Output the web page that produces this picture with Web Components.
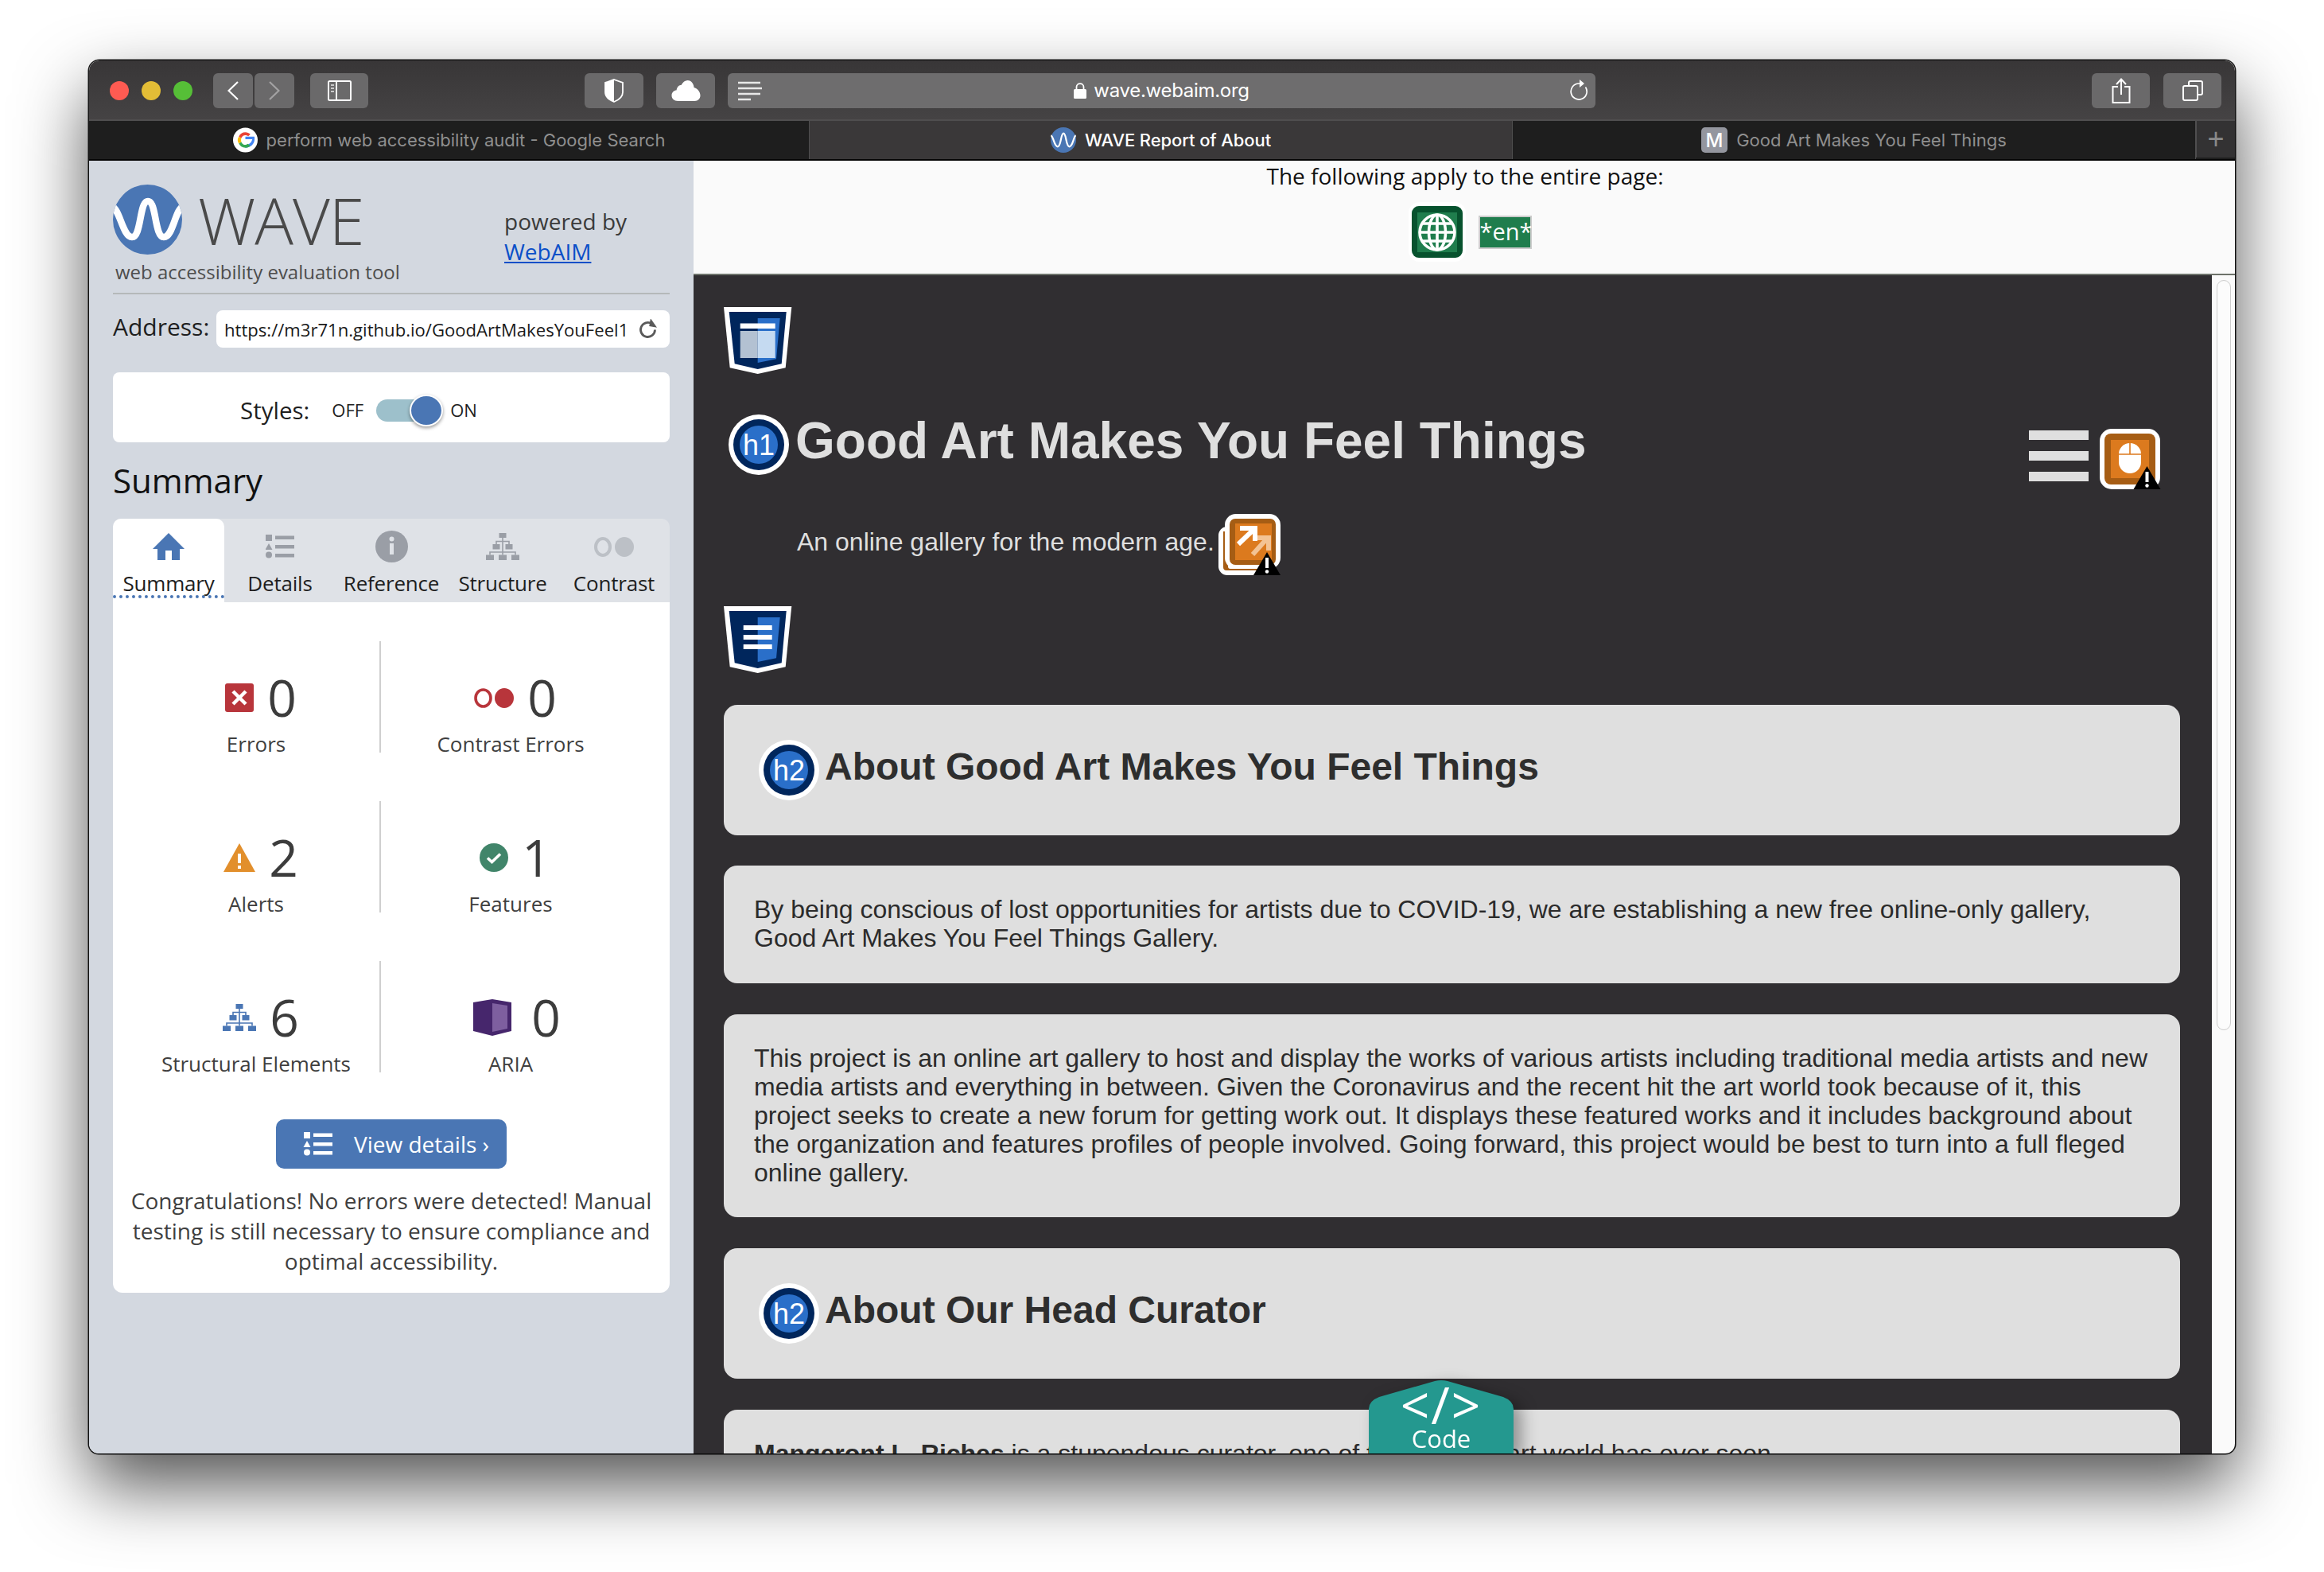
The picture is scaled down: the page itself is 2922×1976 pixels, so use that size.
<!DOCTYPE html>
<html lang="en">
<head>
<meta charset="utf-8">
<title>WAVE Report of About</title>
<style>
  html, body { margin: 0; background: #fff; }
  body { width: 2922px; height: 1976px; overflow: hidden; }
</style>
</head>
<body>
<browser-window>
  <browser-toolbar slot="chrome"></browser-toolbar>
  <tab-strip slot="chrome">
    <tab-item icon="google">perform web accessibility audit - Google Search</tab-item>
    <tab-item icon="wavefav" active>WAVE Report of About</tab-item>
    <tab-item icon="mfav">Good Art Makes You Feel Things</tab-item>
  </tab-strip>
  <wave-sidebar></wave-sidebar>
  <report-view>
    <content-panel heading="h2">About Good Art Makes You Feel Things</content-panel>
    <content-panel style="margin-top:-1px;padding-bottom:39px">By being conscious of lost opportunities for artists due to COVID-19, we are establishing a new free online-only gallery, Good Art Makes You Feel Things Gallery.</content-panel>
    <content-panel>This project is an online art gallery to host and display the works of various artists including traditional media artists and new media artists and everything in between. Given the Coronavirus and the recent hit the art world took because of it, this project seeks to create a new forum for getting work out. It displays these featured works and it includes background about the organization and features profiles of people involved. Going forward, this project would be best to turn into a full fleged online gallery.</content-panel>
    <content-panel heading="h2">About Our Head Curator</content-panel>
    <content-panel>
      <b>Mangeront L. Riches</b> is a stupendous curator, one of the best the art world has ever seen.</content-panel>
  </report-view>
</browser-window>

<script>
// every svg used on the page, looked up by <ui-icon name="...">
const shieldBase = `<path d="M0 0H85.3L77.7 76.3 42.7 84 7.7 76.3Z" fill="#fff"/><path d="M6.7 6H78.7L72.7 71.3 42.7 78 13.7 71.3Z" fill="#00265c"/><path d="M42.7 14H70.7L66 65.3 42.7 70Z" fill="#2a6fc9"/>`;
const warnTri = (x, y) => `<g transform="translate(${x} ${y})"><path d="M0 29 17 0 34 29Z" fill="#000"/><path d="M17 7V20" stroke="#fff" stroke-width="4"/><circle cx="17" cy="24.5" r="2.2" fill="#fff"/></g>`;
const treeIcon = (fill, w, h) => `<svg width="${w}" height="${h}" viewBox="0 0 42 34"><g fill="${fill}"><rect x="16.500" y="0" width="9" height="6"/><rect x="8.500" y="14" width="9" height="6.500"/><rect x="24.500" y="14" width="9" height="6.500"/><rect x="0" y="27.500" width="10" height="6.500"/><rect x="16" y="27.500" width="10" height="6.500"/><rect x="32" y="27.500" width="10" height="6.500"/></g><g fill="none" stroke="${fill}" stroke-width="1.600"><path d="M21 6V27.500M13 14V10.500H29V14M5 27.500V24H37V27.500"/></g></svg>`;
const listIcon = (fill, w, h) => `<svg width="${w}" height="${h}" viewBox="0 0 36 30"><g fill="${fill}"><rect x="0" y="0" width="8" height="8"/><path d="M4 11 8.500 19H-.5Z"/><circle cx="4" cy="25.500" r="4"/><rect x="12" y="1.500" width="24" height="4.500"/><rect x="12" y="13" width="24" height="4.500"/><rect x="12" y="24" width="24" height="4.500"/></g></svg>`;
const headingIcon = (t) => `<svg width="76" height="76" viewBox="0 0 76 76"><circle cx="38" cy="38" r="38" fill="#fff"/><circle cx="38" cy="38" r="32" fill="#00265c"/><circle cx="38" cy="38" r="24" fill="#2a6fc9"/><text x="38" y="51" font-family="'Liberation Sans',sans-serif" font-size="36" font-weight="400" text-anchor="middle" fill="#fff">${t}</text></svg>`;
const ICONS = {
  back: `<svg width="14" height="24" viewBox="0 0 14 24"><path d="M13 1 1.500 12 13 23" fill="none" stroke="#fff" stroke-width="2.200"/></svg>`,
  forward: `<svg width="14" height="24" viewBox="0 0 14 24"><path d="M1 1 12.500 12 1 23" fill="none" stroke="#a3a2a3" stroke-width="2.200"/></svg>`,
  sidebar: `<svg width="30" height="26" viewBox="0 0 30 26"><rect x="1" y="1" width="28" height="24" rx="1.500" fill="none" stroke="#fff" stroke-width="2"/><path d="M11 1V25" stroke="#fff" stroke-width="2"/><path d="M4 6H8M4 10H8M4 14H8" stroke="#c9c9c9" stroke-width="2"/></svg>`,
  shieldBtn: `<svg width="24" height="30" viewBox="0 0 24 30"><path d="M12 1 23 5V17C23 23 17 27 12 29 7 27 1 23 1 17V5Z" fill="none" stroke="#fff" stroke-width="1.800"/><path d="M12 1 1 5V17C1 23 7 27 12 29Z" fill="#fff"/></svg>`,
  cloud: `<svg width="37" height="26" viewBox="0 0 36 26"><path d="M8 26C3 26 0 23 0 19 0 15 3 12.500 6 12.500 7 7 10 6 12 6 14 2 17 0 20 0 25 0 28 5 28 9 32 10 36 14 36 19 36 23 33 26 29 26Z" fill="#fff"/></svg>`,
  reader: `<svg width="30" height="26" viewBox="0 0 30 26"><path d="M0 2H28M0 9H30M0 16H28M0 23H16" stroke="#e8e8e8" stroke-width="2.400"/></svg>`,
  lock: `<svg width="16" height="20" viewBox="0 0 16 20"><rect x="0" y="8" width="16" height="12" rx="1.500" fill="#fff"/><path d="M3.500 9V5.500C3.500 3 5.500 1.200 8 1.200S12.500 3 12.500 5.500V9" fill="none" stroke="#fff" stroke-width="1.800"/></svg>`,
  reload: `<svg width="24" height="26" viewBox="0 0 24 26"><path d="M20.500 9.500A10 10 0 1 1 12 5H15" fill="none" stroke="#fff" stroke-width="1.700"/><path d="M13 0 19 5 13 10Z" fill="#fff"/></svg>`,
  share: `<svg width="24" height="32" viewBox="0 0 24 32"><path d="M8 11H1.500V31H22.500V11H16" fill="none" stroke="#fff" stroke-width="2"/><path d="M12 21V2M6 8 12 1.500 18 8" fill="none" stroke="#fff" stroke-width="2"/></svg>`,
  tabs: `<svg width="26" height="26" viewBox="0 0 26 26"><rect x="1" y="7" width="18" height="18" rx="2" fill="none" stroke="#fff" stroke-width="2"/><path d="M8 6V3C8 2 9 1 10 1H23C24 1 25 2 25 3V16C25 17 24 18 23 18H20" fill="none" stroke="#fff" stroke-width="2"/></svg>`,
  google: `<svg width="31" height="32" viewBox="0 0 32 32"><circle cx="16" cy="16" r="16" fill="#fff"/><path d="M16 11.500V17H25C24 21.500 20.500 24.500 16 24.500V28C23 28 28 23 28 16.500 28 15.500 28 14.500 27.800 13.500H16Z" fill="#4285f4" transform="translate(0 -2)"/><path d="M7.500 20.500C9 24 12 26 16 26 19 26 21 25 22.500 23.500L19 21C18 21.800 17 22.300 16 22.300 13.500 22.300 11.500 20.500 10.800 18.500Z" fill="#34a853"/><path d="M6 16C6 17.500 6.500 19 7.500 20.500L10.800 18.500C10.300 17 10.300 15 10.800 13.500L7.500 11.500C6.500 13 6 14.500 6 16Z" fill="#fbbc05"/><path d="M7.500 11.500C9 8 12 6 16 6 18.500 6 20.800 7 22.500 8.500L19.800 11.200C18.800 10.300 17.500 9.700 16 9.700 13.500 9.700 11.500 11.300 10.800 13.500Z" fill="#ea4335"/></svg>`,
  wavefav: `<svg width="32" height="32" viewBox="0 0 87 87"><circle cx="43.500" cy="43.500" r="43.500" fill="#4a76b4"/><path d="M1 28C10 32 12 66 24 66 36 66 34 21 44 21 54 21 52 66 64 66 76 66 78 32 86 28" fill="none" stroke="#fff" stroke-width="6"/></svg>`,
  mfav: `<svg width="33" height="32" viewBox="0 0 33 32"><rect width="33" height="32" rx="5" fill="#94969f"/><text x="16.500" y="25" font-family="Inter,'Liberation Sans',sans-serif" font-size="24" font-weight="500" text-anchor="middle" fill="#fff">M</text></svg>`,
  logo: `<svg width="87" height="88" viewBox="0 0 87 88"><defs><clipPath id="c"><ellipse cx="43.500" cy="44" rx="43.500" ry="44"/></clipPath></defs><ellipse cx="43.500" cy="44" rx="43.500" ry="44" fill="#4a76b4"/><path clip-path="url(#c)" d="M-2 27C9 30 12 66 24 66 36 66 33 21 44 21 55 21 52 66 64 66 76 66 78 30 89 27" fill="none" stroke="#fff" stroke-width="8.500"/></svg>`,
  refresh: `<svg width="26" height="26" viewBox="0 0 26 26"><path d="M21.500 13.500A9 9 0 1 1 17.500 6" fill="none" stroke="#5a5a5a" stroke-width="2.800"/><path d="M15 0V10H25Z" fill="#5a5a5a" transform="rotate(10 20 5)"/></svg>`,
  home: `<svg width="40" height="34" viewBox="0 0 40 34"><path d="M20 0 40 20H34V34H24V22H16V34H6V20H0Z" fill="#4a76b4"/></svg>`,
  list: listIcon("#9a9ea6", 36, 30),
  info: `<svg width="41" height="40" viewBox="0 0 41 40"><ellipse cx="20.500" cy="20" rx="20.500" ry="20" fill="#9a9ea6"/><circle cx="20.500" cy="10.500" r="3" fill="#dfe2e7"/><rect x="18" y="16" width="5" height="14" fill="#dfe2e7"/></svg>`,
  treeGray: treeIcon("#9a9ea6", 42, 38),
  contrastGray: `<svg width="50" height="25" viewBox="0 0 50 25"><ellipse cx="11" cy="12.500" rx="9" ry="10.500" fill="none" stroke="#bcc0c6" stroke-width="4"/><ellipse cx="38" cy="12.500" rx="12" ry="12.500" fill="#bcc0c6"/></svg>`,
  error: `<svg width="36" height="36" viewBox="0 0 36 36"><rect width="36" height="36" rx="3" fill="#b8353b"/><path d="M10 10 26 26M26 10 10 26" stroke="#fff" stroke-width="4.500"/></svg>`,
  contrast: `<svg width="50" height="25" viewBox="0 0 50 25"><ellipse cx="11.500" cy="12.500" rx="9.500" ry="10.500" fill="none" stroke="#b8353b" stroke-width="3.600"/><ellipse cx="38" cy="12.500" rx="12" ry="12.500" fill="#b8353b"/></svg>`,
  alert: `<svg width="40" height="36" viewBox="0 0 40 36"><path d="M20 0 40 36H0Z" fill="#e28f2c"/><rect x="18" y="13" width="4" height="12" fill="#fff"/><rect x="18" y="28" width="4" height="4" fill="#fff"/></svg>`,
  feature: `<svg width="36" height="36" viewBox="0 0 36 36"><circle cx="18" cy="18" r="18" fill="#41856a"/><path d="M10 18.500 15.500 23.500 26 13.500" fill="none" stroke="#fff" stroke-width="3.600"/></svg>`,
  tree: treeIcon("#4a76b4", 42, 38),
  aria: `<svg width="48" height="46" viewBox="0 0 48 46"><path d="M0 4 24 0 48 4V40L24 46 0 40Z" fill="#46266c"/><path d="M24 5 43 8V37L24 41Z" fill="#7e5f9f"/></svg>`,
  listWhite: listIcon("#fff", 38, 30),
  globe: `<svg width="72" height="75" viewBox="0 0 72 75"><rect width="72" height="75" rx="14" fill="#fff"/><rect x="4" y="5" width="64" height="65" rx="9" fill="#07522e"/><rect x="11" y="13" width="50" height="50" fill="#1f7d4d"/><g fill="none" stroke="#fff" stroke-width="3.600"><circle cx="36" cy="38" r="22"/><ellipse cx="36" cy="38" rx="10.500" ry="22"/><path d="M36 16V60M14 38H58M17 27H55M17 49H55"/></g></svg>`,
  shieldHeader: `<svg width="86" height="84" viewBox="0 0 86 84">${shieldBase}<rect x="20.700" y="20.500" width="44" height="6.500" fill="#fff"/><rect x="20.700" y="30" width="22" height="34" fill="#b3c1d2"/><rect x="42.700" y="30" width="22" height="34" fill="#c5daf1"/></svg>`,
  shieldMain: `<svg width="86" height="84" viewBox="0 0 86 84">${shieldBase}<path d="M24.700 27H60.700M24.700 39H60.700M24.700 51H60.700" stroke="#fff" stroke-width="6"/></svg>`,
  h1: headingIcon("h1"),
  h2: headingIcon("h2"),
  mouse: `<svg width="77" height="76" viewBox="0 0 77 76"><rect width="76" height="76" rx="15" fill="#fff"/><rect x="6" y="6" width="64" height="64" rx="8" fill="#a65d14"/><rect x="14" y="14" width="48" height="48" fill="#dc7a1e"/><rect x="24" y="18" width="28" height="38" rx="14" fill="#fff"/><path d="M24 32H52M38 18V32" stroke="#dc7a1e" stroke-width="1.600"/>${warnTri(42.500, 47)}</svg>`,
  newWindow: `<svg width="80" height="77" viewBox="0 0 80 77"><rect x="0" y="16" width="62" height="61" rx="11" fill="#fff"/><path d="M6 22H12V66C12 68 13 69 15 69H50V71H10C7.500 71 6 69.500 6 67Z" fill="#a65d14"/><rect x="8" y="0" width="70" height="69" rx="14" fill="#fff"/><rect x="14" y="6" width="58" height="58" rx="7" fill="#a65d14"/><rect x="21" y="12" width="46" height="46" fill="#dc7a1e"/><path d="M43 51 61 31M47 30H63V46" fill="none" stroke="#f3c394" stroke-width="6"/><path d="M25 38 45 19M27 18H46V34" fill="none" stroke="#fff" stroke-width="6"/>${warnTri(44, 48)}</svg>`,
};

class UiIcon extends HTMLElement {
  constructor() {
    super();
    this.attachShadow({ mode: "open" });
  }
  connectedCallback() {
    this.shadowRoot.innerHTML = `<style>:host{display:inline-flex;flex:none;line-height:0}</style>` + (ICONS[this.getAttribute("name")] || "");
  }
}
customElements.define("ui-icon", UiIcon);

// base class: markup + styles handed over by each component
class ShadowBox extends HTMLElement {
  constructor() {
    super();
    this.attachShadow({ mode: "open" });
  }
  connectedCallback() {
    this.shadowRoot.innerHTML = `<style>${this.css()}</style>${this.html()}`;
  }
}

class BrowserWindow extends ShadowBox {
  css() { return `
    :host { display: block; box-sizing: border-box; width: 2698px; height: 1751px; margin: 76px 0 0 112px;
      border-radius: 13px 13px 12px 12px; box-shadow: 0 40px 88px rgba(0,0,0,.68), 0 0 0 1.500px #1a1a1a; overflow: hidden; }
    .frame { display: flex; flex-direction: column; height: 100%; overflow: hidden; border-radius: inherit; }
    .body { flex: 1; min-height: 0; display: flex; }
  `; }
  html() { return `<div class="frame"><slot name="chrome"></slot><div class="body"><slot></slot></div></div>`; }
}
customElements.define("browser-window", BrowserWindow);

class BrowserToolbar extends ShadowBox {
  css() { return `
    :host { display: flex; align-items: center; box-sizing: border-box; height: 76px; padding: 1px 17px 0 26px;
      background: linear-gradient(#383637, #454344); border-bottom: 2px solid #4f4e4f; }
    .lights { display: flex; gap: 16px; margin-right: 26px; }
    .lights i { width: 24px; height: 24px; border-radius: 50%; }
    .btn { display: flex; align-items: center; justify-content: center; height: 44px; background: #6a696a; border-radius: 6px; box-sizing: border-box; }
    .addr { width: 1091px; margin-left: 16px; position: relative; justify-content: center; gap: 9px;
      font: 24px Inter, "Liberation Sans", sans-serif; color: #fff; letter-spacing: -.3px; background: #6e6d6e; }
    .addr .l { position: absolute; left: 13px; top: 10px; }
    .addr .r { position: absolute; right: 9px; top: 8px; }
    .spacer { flex: 1; }
  `; }
  html() { return `
    <div class="lights"><i style="background:#fe5b52"></i><i style="background:#e3bd36"></i><i style="background:#56bf37"></i></div>
    <div class="btn" style="width:50px"><ui-icon name="back"></ui-icon></div>
    <div class="btn" style="width:50px;margin-left:2px"><ui-icon name="forward"></ui-icon></div>
    <div class="btn" style="width:73px;margin-left:20px"><ui-icon name="sidebar"></ui-icon></div>
    <div class="btn" style="width:74px;margin-left:272px"><ui-icon name="shieldBtn"></ui-icon></div>
    <div class="btn" style="width:74px;margin-left:16px"><ui-icon name="cloud"></ui-icon></div>
    <div class="btn addr"><ui-icon class="l" name="reader"></ui-icon><ui-icon name="lock"></ui-icon><span>wave.webaim.org</span><ui-icon class="r" name="reload"></ui-icon></div>
    <div class="spacer"></div>
    <div class="btn" style="width:73px"><ui-icon name="share"></ui-icon></div>
    <div class="btn" style="width:73px;margin-left:17px"><ui-icon name="tabs"></ui-icon></div>
  `; }
}
customElements.define("browser-toolbar", BrowserToolbar);

class TabStrip extends ShadowBox {
  css() { return `
    :host { display: flex; box-sizing: border-box; height: 50px; padding-bottom: 2px; background: #1e1e1e; border-bottom: 2px solid #050505; }
    .plus { flex: 1; display: flex; align-items: center; justify-content: center; background: #333233; color: #8a8a8a;
      border-left: 1px solid #4f4e4f; font: 300 36px "Liberation Sans", sans-serif; }
    ::slotted(:nth-child(1)) { width: 906px; }
    ::slotted(:nth-child(2)) { width: 884px; }
    ::slotted(:nth-child(3)) { width: 859px; }
  `; }
  html() { return `<slot></slot><div class="plus">+</div>`; }
}
customElements.define("tab-strip", TabStrip);

class TabItem extends ShadowBox {
  css() { return `
    :host { display: flex; align-items: center; justify-content: center; gap: 11px; box-sizing: border-box; height: 48px;
      font: 22px Inter, "Liberation Sans", sans-serif; color: #8f8f8f; border-right: 1px solid #4f4e4f; }
    :host([active]) { background: #3a3839; color: #fff; font-weight: 500; letter-spacing: -.1px; }
  `; }
  html() { return `<ui-icon name="${this.getAttribute("icon")}"></ui-icon><span><slot></slot></span>`; }
}
customElements.define("tab-item", TabItem);

class WaveSidebar extends ShadowBox {
  css() { return `
    :host { display: block; box-sizing: border-box; width: 760px; flex: none; height: 100%; padding: 0 30px; background: #d3d8e0;
      font-family: "Open Sans", "Liberation Sans", sans-serif; color: #1e1e1e; }
    .head { display: flex; height: 166px; border-bottom: 2px solid #b5b9ba; box-sizing: content-box; }
    .brand { width: 492px; padding-top: 30px; }
    .logo { display: flex; align-items: center; height: 88px; gap: 20px; }
    .wave { font-size: 81px; font-weight: 300; color: #4a4a4a; line-height: 88px; letter-spacing: -1px; padding-top: 2px; }
    .tag { font-size: 24px; line-height: 30px; color: #4d4d4d; margin: 7px 0 0 3px; }
    .pow { padding-top: 57px; font-size: 28px; line-height: 38px; color: #3a3a3a; }
    .pow a { color: #0b4fc8; text-decoration: underline; display: block; }
    .addr { display: flex; align-items: center; height: 47px; margin-top: 20px; }
    .addr label { width: 130px; font-size: 30px; padding-bottom: 7px; }
    .field { flex: 1; height: 47px; display: flex; align-items: center; justify-content: space-between; padding: 0 14px 0 10px;
      box-sizing: border-box; background: #fff; border-radius: 8px; font-size: 22.100px; color: #1a1a1a; }
    .styles { display: flex; align-items: center; height: 88px; margin-top: 31px; padding: 6px 0 0 160px; box-sizing: border-box;
      background: #fff; border-radius: 8px; font-size: 29.500px; }
    .styles small { font-size: 22px; }
    .track { position: relative; width: 57px; height: 28px; margin: 0 36px 0 16px; background: #9dc0cb; border-radius: 14px 0 0 14px; top: 1px; }
    .knob { position: absolute; left: 42px; top: -6px; width: 42px; height: 40px; border-radius: 50%; background: #4a76b4; border: 2px solid #fff; box-sizing: border-box; box-shadow: 0 2px 4px rgba(0,0,0,.4); }
    h2 { margin: 0; height: 96px; padding-top: 21px; box-sizing: border-box; font-size: 42px; line-height: 54px; font-weight: 400; color: #111; }
    .tabs { display: grid; grid-template-columns: repeat(5, 140px); height: 105px; background: #dfe2e7; border-radius: 10px 10px 0 0; }
  `; }
  html() { return `
    <div class="head">
      <div class="brand">
        <div class="logo"><ui-icon name="logo"></ui-icon><span class="wave">WAVE</span></div>
        <div class="tag">web accessibility evaluation tool</div>
      </div>
      <div class="pow">powered by<a>WebAIM</a></div>
    </div>
    <div class="addr"><label>Address:</label><div class="field"><span>https://m3r71n.github.io/GoodArtMakesYouFeel1</span><ui-icon name="refresh"></ui-icon></div></div>
    <div class="styles"><span>Styles:</span><small style="margin-left:28px">OFF</small><div class="track"><div class="knob"></div></div><small>ON</small></div>
    <h2>Summary</h2>
    <div class="tabs">
      <side-tab icon="home" active>Summary</side-tab>
      <side-tab icon="list">Details</side-tab>
      <side-tab icon="info">Reference</side-tab>
      <side-tab icon="treeGray">Structure</side-tab>
      <side-tab icon="contrastGray">Contrast</side-tab>
    </div>
    <summary-card></summary-card>
  `; }
}
customElements.define("wave-sidebar", WaveSidebar);

class SideTab extends ShadowBox {
  css() { return `
    :host { display: flex; flex-direction: column; align-items: center; box-sizing: border-box; height: 105px; font-size: 26px; color: #1e1e1e; }
    :host([active]) { background: #fff; border-radius: 10px 10px 0 0; }
    .ic { height: 70px; display: flex; align-items: center; }
    .lb { line-height: 36px; height: 30px; margin-top: -7px; flex: none; letter-spacing: -.2px; }
    :host([active]) .lb { width: 100%; text-align: center; border-bottom: 4px dotted #4a76b4; height: 33px; }
  `; }
  html() { return `<div class="ic"><ui-icon name="${this.getAttribute("icon")}"></ui-icon></div><div class="lb"><slot></slot></div>`; }
}
customElements.define("side-tab", SideTab);

class SummaryCard extends ShadowBox {
  css() { return `
    :host { display: block; box-sizing: border-box; height: 868px; padding-top: 49px; background: #fff; border-radius: 0 0 12px 12px; }
    .grid { display: grid; grid-template-columns: 312px 326px; row-gap: 61px; margin-left: 25px; }
    .btn { display: flex; align-items: center; width: 290px; height: 62px; margin: 59px auto 0; box-sizing: border-box; padding-left: 34px; gap: 26px;
      background: #4a76b4; border-radius: 10px; color: #fff; font-size: 28px; }
    p { margin: 21px 0 0; text-align: center; font-size: 28px; line-height: 38px; color: #3f3f3f; }
  `; }
  html() { return `
    <div class="grid">
      <stat-box icon="error" count="0" divided>Errors</stat-box>
      <stat-box icon="contrast" count="0">Contrast Errors</stat-box>
      <stat-box icon="alert" count="2" divided>Alerts</stat-box>
      <stat-box icon="feature" count="1">Features</stat-box>
      <stat-box icon="tree" count="6" divided>Structural Elements</stat-box>
      <stat-box icon="aria" count="0" wide>ARIA</stat-box>
    </div>
    <div class="btn"><ui-icon name="listWhite"></ui-icon><span>View details ›</span></div>
    <p>Congratulations! No errors were detected! Manual testing is still necessary to ensure compliance and optimal accessibility.</p>
  `; }
}
customElements.define("summary-card", SummaryCard);

class StatBox extends ShadowBox {
  css() { return `
    :host { display: block; box-sizing: border-box; height: 140px; text-align: center; color: #3f3f3f; }
    :host([divided]) { border-right: 2px solid #cfcfcf; }
    .num { display: flex; align-items: center; justify-content: center; gap: 17px; height: 72px; padding: 35px 0 0 12px; font-size: 64px; line-height: 72px; color: #3c3c3c; }
    :host([wide]) .num { gap: 25px; padding-left: 16px; }
    .lb { font-size: 26px; line-height: 38px; margin-top: 3px; white-space: nowrap; }
  `; }
  html() { return `<div class="num"><ui-icon name="${this.getAttribute("icon")}"></ui-icon><span>${this.getAttribute("count")}</span></div><div class="lb"><slot></slot></div>`; }
}
customElements.define("stat-box", StatBox);

class ReportView extends ShadowBox {
  css() { return `
    :host { display: block; position: relative; flex: 1; min-width: 0; height: 100%; overflow: hidden;
      font-family: "Liberation Sans", Arial, sans-serif; background: #302e31; }
    .top { height: 144px; box-sizing: border-box; background: #fafafa; border-bottom: 2px solid #6d726a; text-align: center; }
    .top p { margin: 0; font: 28px/40px "Open Sans", sans-serif; color: #111; position: relative; left: 1px; top: -1px; }
    .marks { display: flex; justify-content: center; align-items: center; gap: 16px; margin-top: 12px; padding-left: 14px; }
    .en { width: 67px; height: 42px; box-sizing: border-box; border: 2px solid #ccc; background: #1f7d4d; color: #fff;
      font: 29px/36px "Open Sans", sans-serif; text-align: center; white-space: nowrap; }
    .wrap { display: flex; height: calc(100% - 144px); }
    .page { width: 1909px; flex: none; box-sizing: border-box; padding: 40px 40px 0 38px; overflow: hidden; }
    .bar { flex: 1; background: #fafafa; padding: 6px 5px 0 6px; box-sizing: border-box; }
    .thumb { width: 18px; height: 943px; box-sizing: border-box; border: 1.500px solid #cdcdcd; border-radius: 9px; background: #fcfcfc; }
    .mark { line-height: 0; }
    h1 { display: flex; align-items: flex-start; margin: 51px 0 0 6px; height: 94px; font-size: 64px; line-height: 66px; font-weight: 700; color: #dfdfdf; }
    h1 span { margin-left: 8px; }
    .ham { margin-left: auto; display: flex; flex-direction: column; gap: 14px; padding-top: 20px; width: 75px; }
    .ham i { height: 12px; background: #dfdfdf; }
    .acts { margin: 18px 24px 0 14px; }
    .sub { display: flex; align-items: flex-start; margin: 31px 0 0 92px; height: 77px; color: #dfdfdf; font-size: 32px; line-height: 38px; }
    .sub span { padding-top: 16px; }
    .sub ui-icon { margin-left: 5px; }
    .panels { display: flex; flex-direction: column; gap: 39px; margin-top: 40px; }
    .code { position: absolute; left: 849px; bottom: 0; width: 182px; height: 92px; filter: drop-shadow(10px 6px 10px rgba(0,0,0,.35)); }
    .code div { height: 100%; background: #24988f; color: #fff; text-align: center; font-family: "Open Sans", sans-serif;
      clip-path: path("M0 36Q0 26 13 21L83 1Q91 -1 99 1L169 21Q182 26 182 36V92H0Z"); }
    .code b { display: block; font-weight: 400; font-size: 64px; line-height: 54px; padding-top: 4px; letter-spacing: 2px; }
    .code span { display: block; font-size: 31px; line-height: 30px; }
  `; }
  html() { return `
    <div class="top">
      <p>The following apply to the entire page:</p>
      <div class="marks"><ui-icon name="globe"></ui-icon><div class="en">*en*</div></div>
    </div>
    <div class="wrap">
      <div class="page">
        <div class="mark"><ui-icon name="shieldHeader"></ui-icon></div>
        <h1><ui-icon name="h1"></ui-icon><span>Good Art Makes You Feel Things</span>
          <div class="ham"><i></i><i></i><i></i></div><ui-icon class="acts" name="mouse"></ui-icon></h1>
        <div class="sub"><span>An online gallery for the modern age.</span><ui-icon name="newWindow"></ui-icon></div>
        <div class="mark" style="margin-top:39px"><ui-icon name="shieldMain"></ui-icon></div>
        <div class="panels"><slot></slot></div>
      </div>
      <div class="bar"><div class="thumb"></div></div>
    </div>
    <div class="code"><div><b>&lt;/&gt;</b><span>Code</span></div></div>
  `; }
}
customElements.define("report-view", ReportView);

class ContentPanel extends ShadowBox {
  css() { return `
    :host { display: block; box-sizing: border-box; padding: 37px 38px 38px; background: #dfdfdf; border-radius: 17px;
      font-size: 32px; line-height: 36px; color: #2b2b2b; }
    :host([heading]) { padding: 44px; display: flex; gap: 7px; height: 164px; font-size: 48px; font-weight: 700; color: #2e2e2e; }
    .t { padding-top: 4px; line-height: 60px; }
  `; }
  html() {
    const h = this.getAttribute("heading");
    return h ? `<ui-icon name="${h}"></ui-icon><div class="t"><slot></slot></div>` : `<slot></slot>`;
  }
}
customElements.define("content-panel", ContentPanel);
</script>
</body>
</html>
